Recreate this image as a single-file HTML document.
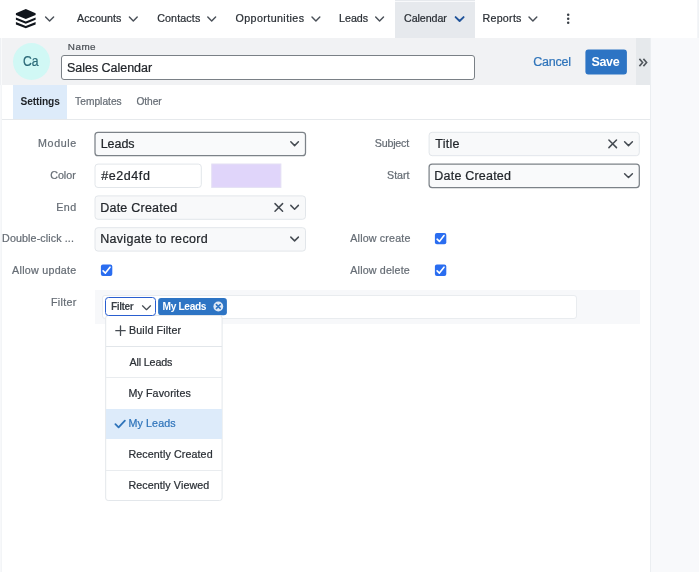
<!DOCTYPE html>
<html><head><meta charset="utf-8">
<style>
*{box-sizing:border-box;margin:0;padding:0}
html,body{width:699px;height:572px;overflow:hidden;background:#fff;font-family:"Liberation Sans",sans-serif}
.a{position:absolute}
.t{position:absolute;white-space:pre;line-height:1;font-family:"Liberation Sans",sans-serif}
svg{position:absolute;overflow:visible}
.sel{position:absolute;height:24.5px;border:1px solid #e1e5e9;border-radius:3px;background:#f8f9fa}
.sel.dk{border-color:#7d8389;background:#f9fafb}
.cb{position:absolute;width:11.4px;height:11.4px;background:#2a6df0;border-radius:2px}
.sep{position:absolute;left:106.2px;width:115.4px;height:1px;background:#e9ecef}
</style></head><body>
<!-- nav -->
<div class="a" style="left:0;top:0;width:699px;height:38px;background:#fff"></div>
<div class="a" style="left:696.8px;top:0;width:2.2px;height:38px;background:linear-gradient(90deg,#f6f7f9,#eef1f4)"></div>
<div class="a" style="left:395px;top:0;width:80px;height:38px;background:#e6e9ed"></div>
<div class="a" style="left:395px;top:1px;width:80px;height:1px;background:#f8f9fb"></div>
<!-- logo -->
<svg style="left:0;top:0" width="60" height="38"><g fill="#10151c"><polygon points="25.8,9 35.6,13.2 35.6,14.9 25.8,18.9 15.9,14.9 15.9,13.2"/><polygon points="15.9,17.4 25.8,21.4 35.6,17.4 35.6,19.7 25.8,23.7 15.9,19.7"/><polygon points="15.9,22.1 25.8,26.1 35.6,22.1 35.6,24.4 25.8,28.3 15.9,24.4"/></g></svg>
<!-- nav chevrons -->
<svg style="left:0;top:0" width="699" height="38" fill="none" stroke="#4a5058" stroke-width="1.45" stroke-linecap="round" stroke-linejoin="round">
<path d="M45.6 17.1 L49.6 21.0 L53.6 17.1"/>
<path d="M129.4 17.1 L133.3 21.0 L137.2 17.1"/>
<path d="M207.8 17.1 L211.7 21.0 L215.6 17.1"/>
<path d="M312 17.1 L315.9 21.0 L319.8 17.1"/>
<path d="M375.7 17.1 L379.6 21.0 L383.5 17.1"/>
<path d="M455.6 17.1 L459.6 21.0 L463.6 17.1" stroke="#21549a" stroke-width="1.9"/>
<path d="M529 17.1 L532.9 21.0 L536.8 17.1"/>
</svg>
<svg style="left:0;top:0" width="699" height="38" fill="#383e45"><circle cx="568.2" cy="14.8" r="1.25"/><circle cx="568.2" cy="18.7" r="1.25"/><circle cx="568.2" cy="22.7" r="1.25"/></svg>
<!-- left strip / header / right panel -->
<div class="a" style="left:0;top:38px;width:1.2px;height:46.5px;background:#eff1f4"></div>
<div class="a" style="left:1.2px;top:38px;width:0.9px;height:46.5px;background:#f9fafb"></div>
<div class="a" style="left:0;top:84.5px;width:0.8px;height:488px;background:#f7f8fa"></div>
<div class="a" style="left:1.4px;top:84.5px;width:0.8px;height:488px;background:#f3f5f7"></div>
<div class="a" style="left:2.1px;top:38px;width:647.9px;height:46.5px;background:#f1f2f4"></div>
<div class="a" style="left:636px;top:38px;width:14px;height:46.5px;background:#e6e9ec"></div>
<div class="a" style="left:650px;top:38px;width:49px;height:534px;background:#f8f9fb;border-left:1px solid #ebeef1"></div>
<svg style="left:0;top:0" width="699" height="100" fill="none" stroke="#50565c" stroke-width="1.6" stroke-linejoin="miter"><path d="M639.4 58.9 L642.6 62.5 L639.4 66.1"/><path d="M643.4 58.9 L646.6 62.5 L643.4 66.1"/></svg>
<!-- avatar -->
<div class="a" style="left:12.6px;top:42.6px;width:37px;height:37px;border-radius:50%;background:#d1f8f5"></div>
<!-- name input -->
<div class="a" style="left:61px;top:55px;width:414px;height:24.5px;border:1px solid #7a8086;border-radius:3px;background:#fff"></div>
<!-- save -->
<svg style="left:0;top:0" width="699" height="100"><rect x="585.4" y="49.5" width="41.5" height="24.9" rx="3" fill="#2d74c4"/></svg>
<!-- tabs -->
<div class="a" style="left:13px;top:84.5px;width:54px;height:34.3px;background:#ddebfa"></div>
<div class="a" style="left:1.8px;top:118.8px;width:648.2px;height:1px;background:#e6e9ec"></div>
<!-- selects -->
<svg style="left:0;top:0" width="699" height="300">
<rect x="95.00" y="132.30" width="210.50" height="23.40" rx="3" fill="#f9fafb" stroke="#7c8288" stroke-width="1.25"/>
<rect x="95.00" y="164.10" width="106.30" height="23.40" rx="3" fill="#ffffff" stroke="#e2e6ea" stroke-width="1"/>
<rect x="211.70" y="164.00" width="69.20" height="23.40" rx="0" fill="#e0d5fa" stroke="#e4e0f4" stroke-width="1"/>
<rect x="95.00" y="195.90" width="210.50" height="23.40" rx="3" fill="#f8f9fa" stroke="#e2e6ea" stroke-width="1"/>
<rect x="95.00" y="227.70" width="210.50" height="23.40" rx="3" fill="#f8f9fa" stroke="#e2e6ea" stroke-width="1"/>
<rect x="429.10" y="132.30" width="210.20" height="23.40" rx="3" fill="#f8f9fa" stroke="#e2e6ea" stroke-width="1"/>
<rect x="429.10" y="164.10" width="210.20" height="23.40" rx="3" fill="#f9fafb" stroke="#7c8288" stroke-width="1.25"/>
</svg>
<!-- select icons -->
<svg style="left:0;top:0" width="699" height="300" fill="none" stroke="#454b52" stroke-width="1.5" stroke-linecap="round" stroke-linejoin="round">
<path d="M290.8 141.8 L294.6 145.6 L298.4 141.8"/>
<path d="M290.8 205.4 L294.6 209.2 L298.4 205.4"/>
<path d="M290.8 237.1 L294.6 240.9 L298.4 237.1"/>
<path d="M624.6 141.8 L628.5 145.6 L632.4 141.8"/>
<path d="M624.6 173.7 L628.5 177.5 L632.4 173.7"/>
<path d="M275 203.6 L282.6 211.2 M282.6 203.6 L275 211.2"/>
<path d="M608.9 140 L616.5 147.6 M616.5 140 L608.9 147.6"/>
</svg>
<!-- checkboxes -->
<svg style="left:0;top:0" width="699" height="300" fill="#2a6df0"><rect x="100.9" y="264.6" width="11.4" height="11.4" rx="2"/><rect x="434.9" y="232.9" width="11.4" height="11.4" rx="2"/><rect x="434.9" y="264.6" width="11.4" height="11.4" rx="2"/></svg>
<svg style="left:0;top:0" width="699" height="300" fill="none" stroke="#fff" stroke-width="1.6" stroke-linecap="round" stroke-linejoin="round">
<path d="M103.1 270.9 L105.4 273.1 L110 267.2"/>
<path d="M437.1 239.2 L439.4 241.4 L444 235.5"/>
<path d="M437.1 270.9 L439.4 273.1 L444 267.2"/>
</svg>
<!-- filter row -->
<div class="a" style="left:94.5px;top:290.2px;width:545.5px;height:33.4px;background:#f7f8fa"></div>
<div class="a" style="left:101.8px;top:294.7px;width:475.6px;height:24.4px;background:#fff;border:1px solid #e9ecef;border-radius:3px"></div>
<svg style="left:0;top:0" width="699" height="330"><rect x="158.1" y="298.1" width="68.8" height="17.1" rx="3" fill="#2d74c4"/></svg>
<svg style="left:0;top:0" width="699" height="330"><circle cx="218.3" cy="306.5" r="4.9" fill="#dde8f6"/><path d="M216.4 304.6 L220.2 308.4 M220.2 304.6 L216.4 308.4" stroke="#2d74c4" stroke-width="1.6" stroke-linecap="round"/></svg>
<!-- dropdown -->
<svg style="left:0;top:0" width="699" height="572"><rect x="105.7" y="315.5" width="116.4" height="185" rx="2.5" fill="#fff" stroke="#e3e7eb" stroke-width="1"/></svg>
<div class="a" style="left:106.2px;top:408.8px;width:115.4px;height:30.7px;background:#ddebfa"></div>
<div class="sep" style="top:345.8px;height:1.4px;background:#e2e6ea"></div>
<div class="sep" style="top:377.3px"></div>
<div class="sep" style="top:470px"></div>
<!-- filter button -->
<div class="a" style="left:104.7px;top:297.4px;width:51px;height:18.6px;background:#fff;border:1.7px solid #2a5fd0;border-radius:3.5px"></div>
<svg style="left:0;top:0" width="699" height="572" fill="none" stroke-linecap="round" stroke-linejoin="round">
<path d="M142.5 305.8 L146.5 309.7 L150.5 305.8" stroke="#454b52" stroke-width="1.25"/>
<path d="M115.8 330.7 L125.2 330.7 M120.5 326 L120.5 335.4" stroke="#454b52" stroke-width="1.3"/>
<path d="M115.4 424.2 L118.6 427.4 L124.9 420.6" stroke="#2f74ba" stroke-width="1.8"/>
</svg>
<div id="tx" style="position:absolute;left:0;top:0;width:699px;height:572px;will-change:transform">
<div class="t" style="left:77.0px;top:12px;line-height:12px;font-size:10.7px;letter-spacing:0.051px;color:#2a2f35;-webkit-text-stroke:0.22px #2a2f35;">Accounts</div>
<div class="t" style="left:157.2px;top:12px;line-height:12px;font-size:10.7px;letter-spacing:0.129px;color:#2a2f35;-webkit-text-stroke:0.22px #2a2f35;">Contacts</div>
<div class="t" style="left:235.5px;top:12px;line-height:12px;font-size:10.7px;letter-spacing:0.412px;color:#2a2f35;-webkit-text-stroke:0.22px #2a2f35;">Opportunities</div>
<div class="t" style="left:339.0px;top:12px;line-height:12px;font-size:10.7px;letter-spacing:0.000px;color:#2a2f35;-webkit-text-stroke:0.22px #2a2f35;">Leads</div>
<div class="t" style="left:404.0px;top:12px;line-height:12px;font-size:10.7px;letter-spacing:-0.064px;color:#2a2f35;-webkit-text-stroke:0.22px #2a2f35;">Calendar</div>
<div class="t" style="left:482.5px;top:12px;line-height:12px;font-size:10.7px;letter-spacing:0.255px;color:#2a2f35;-webkit-text-stroke:0.22px #2a2f35;">Reports</div>
<div class="t" style="left:23.2px;top:52px;line-height:17px;font-size:15.2px;letter-spacing:0.000px;color:#2b6a78;transform:scaleX(0.802);transform-origin:0 0;-webkit-text-stroke:0.22px #2b6a78;">Ca</div>
<div class="t" style="left:67.8px;top:41px;line-height:11px;font-size:9.9px;letter-spacing:0.480px;color:#4a4f55;-webkit-text-stroke:0.22px #4a4f55;">Name</div>
<div class="t" style="left:67.0px;top:61px;line-height:14px;font-size:12.5px;letter-spacing:-0.028px;color:#22262b;-webkit-text-stroke:0.22px #22262b;">Sales Calendar</div>
<div class="t" style="left:533.2px;top:55px;line-height:14px;font-size:12.5px;letter-spacing:-0.216px;color:#2f74ba;-webkit-text-stroke:0.22px #2f74ba;">Cancel</div>
<div class="t" style="left:591.4px;top:55px;line-height:14px;font-size:12.5px;letter-spacing:-0.300px;color:#ffffff;font-weight:bold;">Save</div>
<div class="t" style="left:20.6px;top:96px;line-height:11px;font-size:10.2px;letter-spacing:-0.129px;color:#1d2126;font-weight:bold;">Settings</div>
<div class="t" style="left:75.1px;top:96px;line-height:11px;font-size:10.2px;letter-spacing:0.023px;color:#666d75;-webkit-text-stroke:0.22px #666d75;">Templates</div>
<div class="t" style="left:136.4px;top:96px;line-height:11px;font-size:10.2px;letter-spacing:-0.045px;color:#666d75;-webkit-text-stroke:0.22px #666d75;">Other</div>
<div class="t" style="left:38.1px;top:137px;line-height:12px;font-size:10.7px;letter-spacing:0.594px;color:#666d75;-webkit-text-stroke:0.22px #666d75;">Module</div>
<div class="t" style="left:50.2px;top:169px;line-height:12px;font-size:10.7px;letter-spacing:0.000px;color:#666d75;-webkit-text-stroke:0.22px #666d75;">Color</div>
<div class="t" style="left:56.2px;top:201px;line-height:12px;font-size:10.7px;letter-spacing:0.450px;color:#666d75;-webkit-text-stroke:0.22px #666d75;">End</div>
<div class="t" style="left:2.1px;top:232px;line-height:12px;font-size:10.7px;letter-spacing:0.114px;color:#666d75;-webkit-text-stroke:0.22px #666d75;">Double-click ...</div>
<div class="t" style="left:12.1px;top:264px;line-height:12px;font-size:10.7px;letter-spacing:0.270px;color:#666d75;-webkit-text-stroke:0.22px #666d75;">Allow update</div>
<div class="t" style="left:51.0px;top:296px;line-height:12px;font-size:10.7px;letter-spacing:0.288px;color:#666d75;-webkit-text-stroke:0.22px #666d75;">Filter</div>
<div class="t" style="left:374.8px;top:137px;line-height:12px;font-size:10.7px;letter-spacing:-0.210px;color:#666d75;-webkit-text-stroke:0.22px #666d75;">Subject</div>
<div class="t" style="left:387.1px;top:169px;line-height:12px;font-size:10.7px;letter-spacing:-0.068px;color:#666d75;-webkit-text-stroke:0.22px #666d75;">Start</div>
<div class="t" style="left:350.3px;top:232px;line-height:12px;font-size:10.7px;letter-spacing:0.172px;color:#666d75;-webkit-text-stroke:0.22px #666d75;">Allow create</div>
<div class="t" style="left:350.3px;top:264px;line-height:12px;font-size:10.7px;letter-spacing:0.172px;color:#666d75;-webkit-text-stroke:0.22px #666d75;">Allow delete</div>
<div class="t" style="left:100.7px;top:137px;line-height:14px;font-size:12.5px;letter-spacing:-0.045px;color:#22262b;-webkit-text-stroke:0.22px #22262b;">Leads</div>
<div class="t" style="left:101.2px;top:169px;line-height:14px;font-size:12.5px;letter-spacing:0.585px;color:#22262b;-webkit-text-stroke:0.22px #22262b;">#e2d4fd</div>
<div class="t" style="left:100.2px;top:201px;line-height:14px;font-size:12.5px;letter-spacing:0.237px;color:#22262b;-webkit-text-stroke:0.22px #22262b;">Date Created</div>
<div class="t" style="left:100.2px;top:232px;line-height:14px;font-size:12.5px;letter-spacing:0.312px;color:#22262b;-webkit-text-stroke:0.22px #22262b;">Navigate to record</div>
<div class="t" style="left:435.3px;top:137px;line-height:14px;font-size:12.5px;letter-spacing:0.247px;color:#22262b;-webkit-text-stroke:0.22px #22262b;">Title</div>
<div class="t" style="left:434.3px;top:169px;line-height:14px;font-size:12.5px;letter-spacing:0.213px;color:#22262b;-webkit-text-stroke:0.22px #22262b;">Date Created</div>
<div class="t" style="left:111.0px;top:301px;line-height:11px;font-size:10.2px;letter-spacing:-0.432px;color:#3a4047;font-weight:bold;">Filter</div>
<div class="t" style="left:162.5px;top:301px;line-height:11px;font-size:10.2px;letter-spacing:-0.347px;color:#ffffff;font-weight:bold;">My Leads</div>
<div class="t" style="left:129.0px;top:324px;line-height:12px;font-size:10.7px;letter-spacing:0.147px;color:#2a2f35;-webkit-text-stroke:0.22px #2a2f35;">Build Filter</div>
<div class="t" style="left:129.4px;top:356px;line-height:12px;font-size:10.7px;letter-spacing:-0.113px;color:#2a2f35;-webkit-text-stroke:0.22px #2a2f35;">All Leads</div>
<div class="t" style="left:128.4px;top:387px;line-height:12px;font-size:10.7px;letter-spacing:0.115px;color:#2a2f35;-webkit-text-stroke:0.22px #2a2f35;">My Favorites</div>
<div class="t" style="left:128.4px;top:417px;line-height:12px;font-size:10.7px;letter-spacing:0.129px;color:#2f74ba;-webkit-text-stroke:0.22px #2f74ba;">My Leads</div>
<div class="t" style="left:128.4px;top:448px;line-height:12px;font-size:10.7px;letter-spacing:0.108px;color:#2a2f35;-webkit-text-stroke:0.22px #2a2f35;">Recently Created</div>
<div class="t" style="left:128.4px;top:479px;line-height:12px;font-size:10.7px;letter-spacing:0.103px;color:#2a2f35;-webkit-text-stroke:0.22px #2a2f35;">Recently Viewed</div>
</div>
</body></html>
